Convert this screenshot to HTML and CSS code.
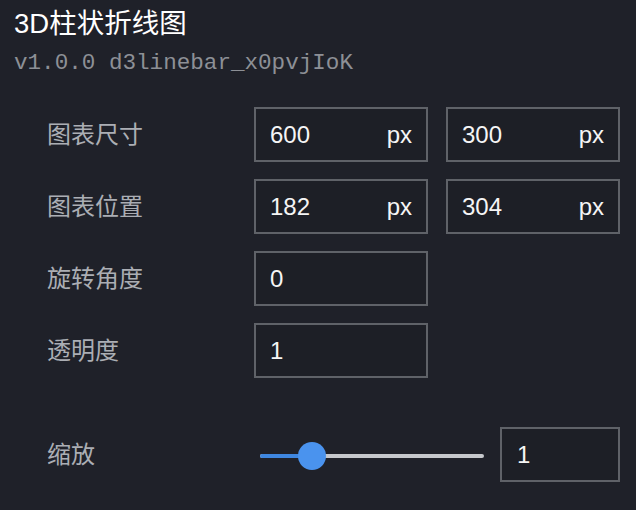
FILE: index.html
```html
<!DOCTYPE html>
<html lang="zh">
<head>
<meta charset="utf-8">
<link rel="stylesheet" href="styles.css">
</head>
<body>
<div class="panel">
  <header class="head">
    <h1 class="title">3D柱状折线图</h1>
    <div class="ver">v1.0.0 d3linebar_x0pvjIoK</div>
  </header>
  <div class="form">
    <div class="row">
      <span class="label">图表尺寸</span>
      <div class="field"><span class="val">600</span><span class="unit">px</span></div>
      <div class="field"><span class="val">300</span><span class="unit">px</span></div>
    </div>
    <div class="row">
      <span class="label">图表位置</span>
      <div class="field"><span class="val">182</span><span class="unit">px</span></div>
      <div class="field"><span class="val">304</span><span class="unit">px</span></div>
    </div>
    <div class="row">
      <span class="label">旋转角度</span>
      <div class="field"><span class="val">0</span></div>
    </div>
    <div class="row">
      <span class="label">透明度</span>
      <div class="field"><span class="val">1</span></div>
    </div>
    <div class="row slider-row">
      <span class="label">缩放</span>
      <div class="slider">
        <div class="track">
          <div class="fill" style="width:52px"></div>
          <div class="thumb"></div>
        </div>
      </div>
      <div class="field small"><span class="val">1</span></div>
    </div>
  </div>
</div>
</body>
</html>
```
FILE: styles.css
```css
html, body {
  margin: 0;
  padding: 0;
  background: #1f2129;
}
body {
  width: 636px;
  height: 510px;
  overflow: hidden;
  font-family: "Liberation Sans", "Noto Sans CJK SC", sans-serif;
  color: #f2f2f2;
}
.panel {
  padding: 6px 0 0 14px;
}
.title {
  margin: 0;
  font-size: 27.5px;
  font-weight: normal;
  line-height: 36px;
  color: #ffffff;
}
.ver {
  margin-top: 6px;
  font-family: "Liberation Mono", monospace;
  font-size: 22.6px;
  line-height: 30px;
  color: #8d9096;
}
.form {
  padding: 29px 0 0 33px;
  display: flex;
  flex-direction: column;
  gap: 17px;
}
.row {
  display: grid;
  grid-template-columns: 189px 174px 174px;
  column-gap: 18px;
  align-items: center;
  height: 55px;
}
.slider-row {
  margin-top: 32px;
  grid-template-columns: 191px 230px 120px;
  column-gap: 16px;
}
.label {
  font-size: 24px;
  color: #abaeb4;
  line-height: 30px;
}
.field {
  box-sizing: border-box;
  height: 55px;
  border: 2px solid #5f6268;
  background: #1d1f26;
  display: flex;
  align-items: center;
  justify-content: space-between;
  padding: 0 14px;
  font-size: 24px;
  color: #f5f5f5;
}
.field.small {
  padding-left: 15px;
}
.slider {
  padding-left: 6px;
  display: flex;
  align-items: center;
  height: 55px;
}
.track {
  position: relative;
  flex: 1;
  height: 4px;
  background: #c6c8cc;
  border-radius: 2px;
  margin-top: 3px;
}
.fill {
  height: 4px;
  background: #3f87e0;
  border-radius: 2px 0 0 2px;
}
.thumb {
  position: absolute;
  left: 38px;
  top: -12px;
  width: 28px;
  height: 28px;
  border-radius: 50%;
  background: #4a93ee;
}
```
